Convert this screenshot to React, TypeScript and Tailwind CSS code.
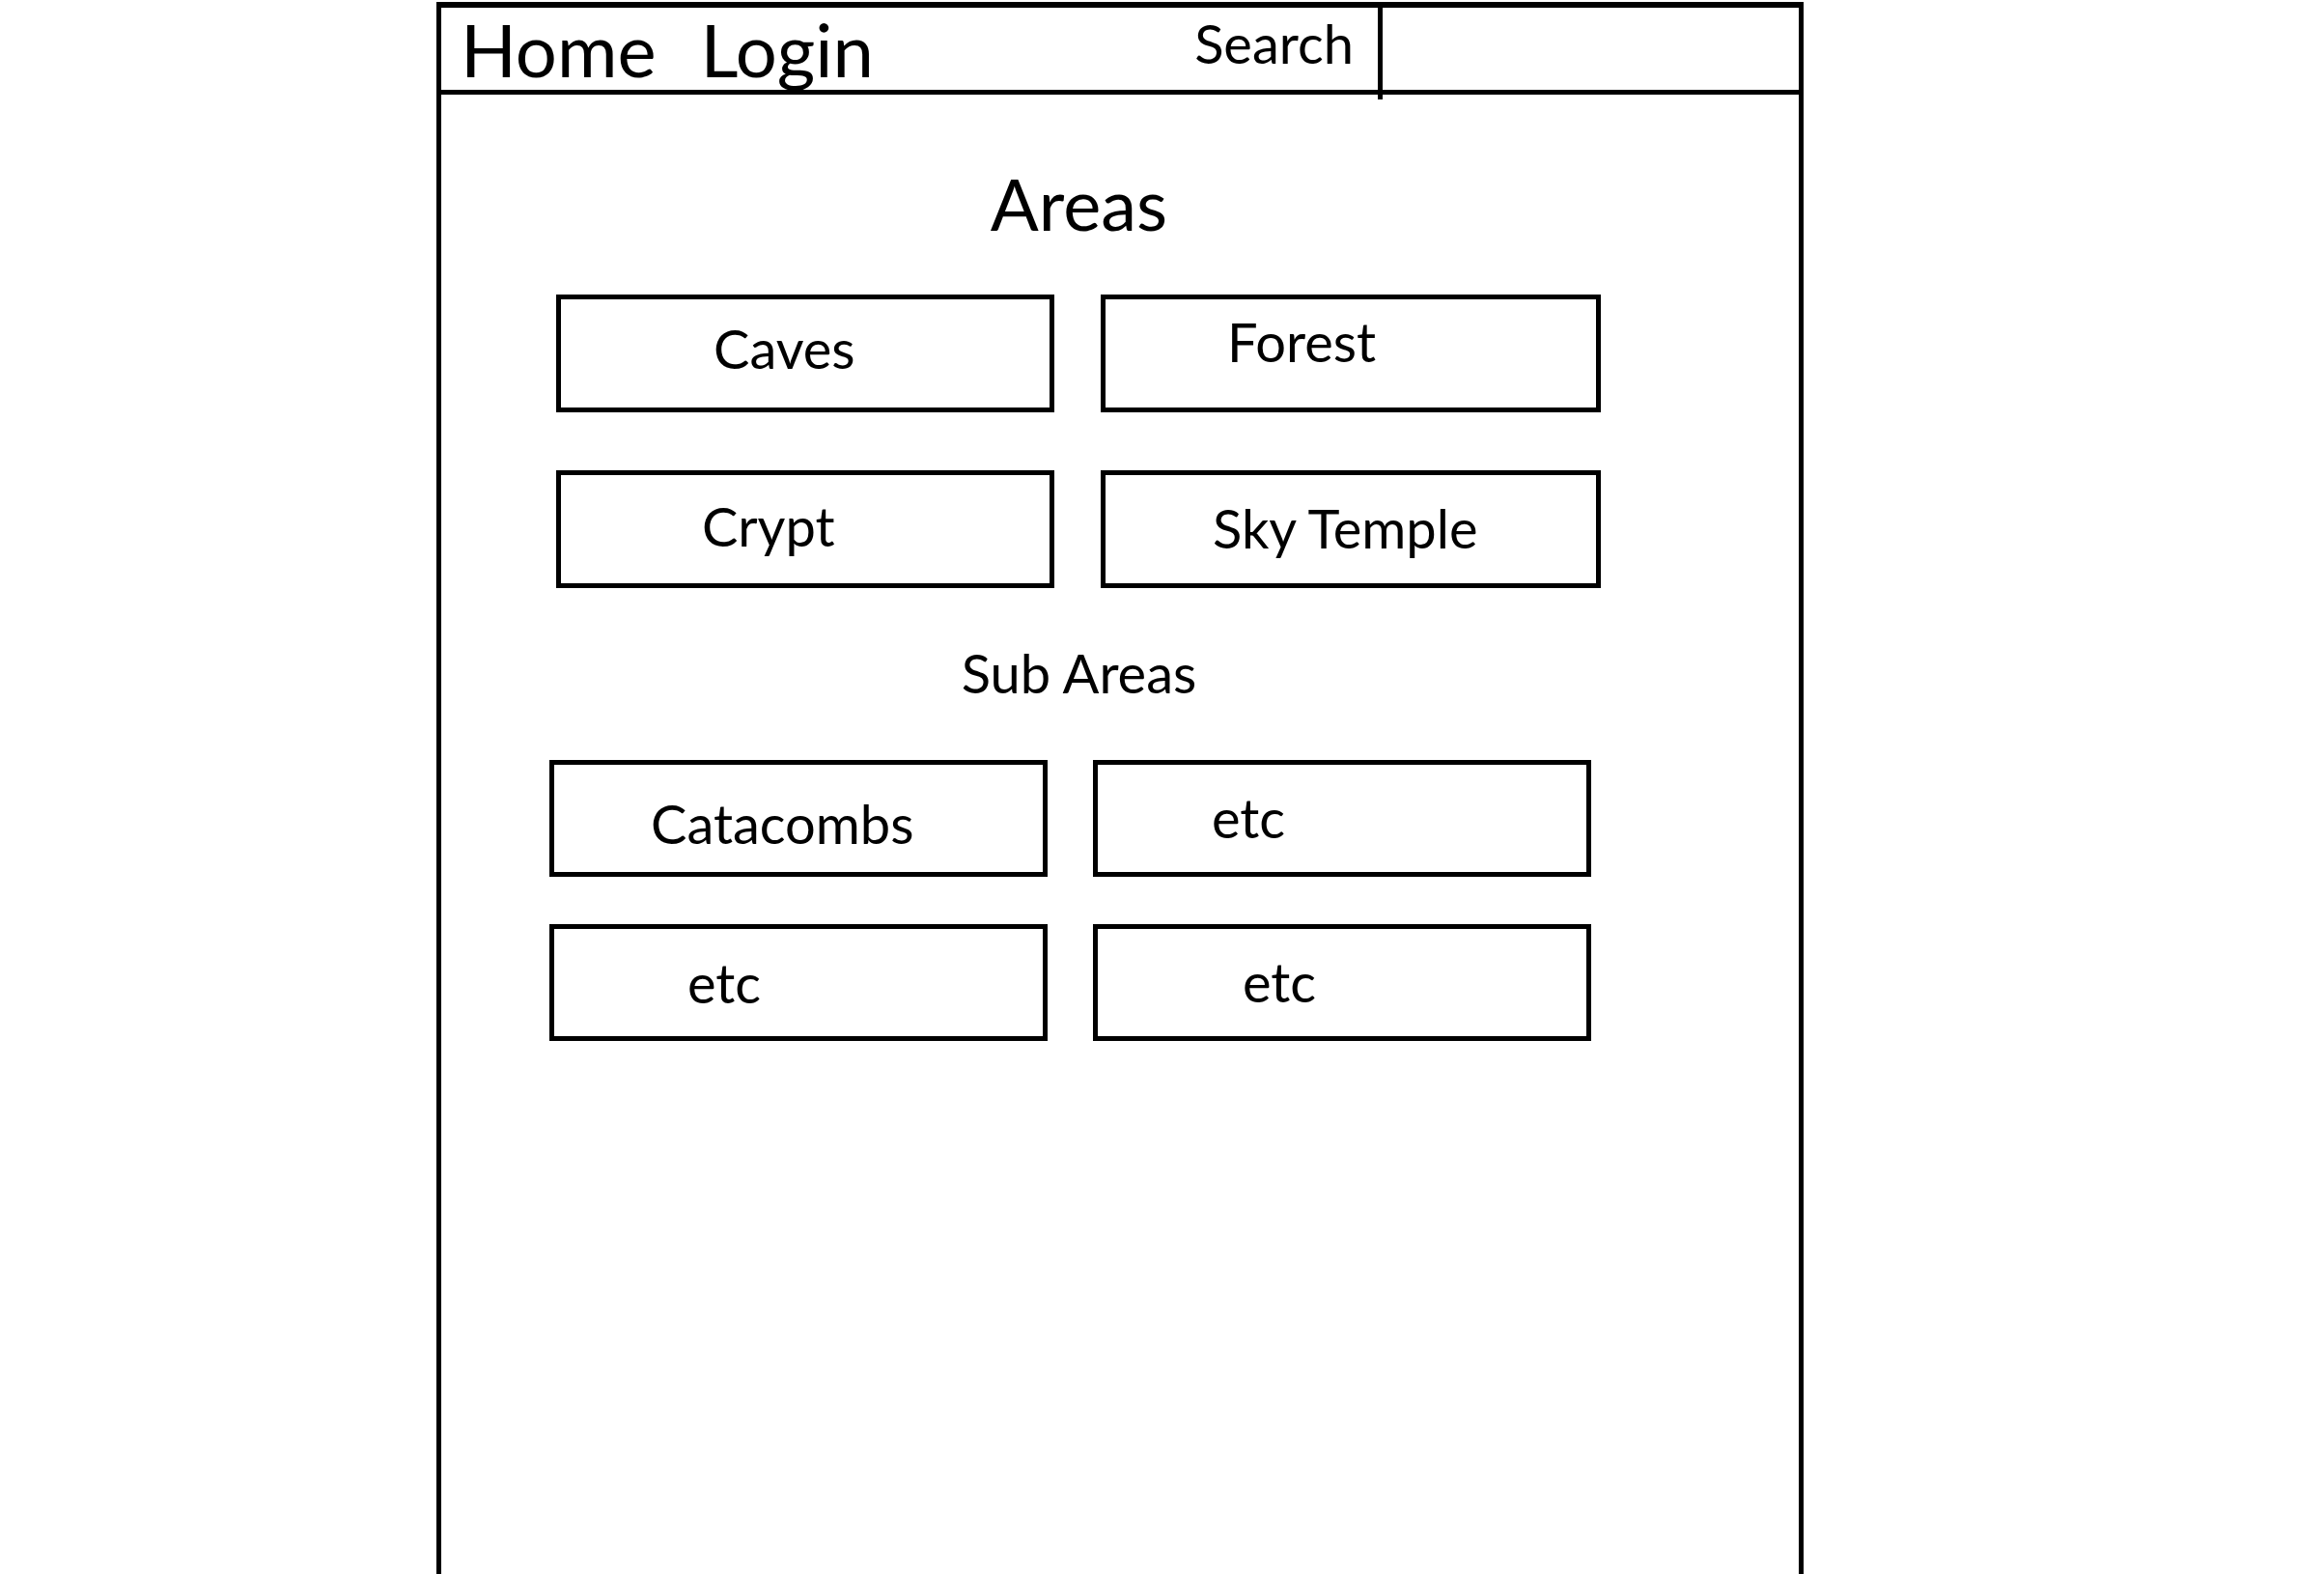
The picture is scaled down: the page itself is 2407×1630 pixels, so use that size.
import React from 'react';

interface Tile {
  label: string;
  pad: string;
}

const areas: Tile[] = [
  { label: 'Caves', pad: 'pl-[158px] pt-[23px]' },
  { label: 'Forest', pad: 'pl-[126px] pt-[16px]' },
  { label: 'Crypt', pad: 'pl-[146px] pt-[25px]' },
  { label: 'Sky Temple', pad: 'pl-[111px] pt-[27px]' },
];

const subAreas: Tile[] = [
  { label: 'Catacombs', pad: 'pl-[100px] pt-[33px]' },
  { label: 'etc', pad: 'pl-[118px] pt-[27px]' },
  { label: 'etc', pad: 'pl-[138px] pt-[28px]' },
  { label: 'etc', pad: 'pl-[150px] pt-[27px]' },
];

const TileBox: React.FC<{ tile: Tile; height: string }> = ({ tile, height }) => (
  <div className={`border-[5px] border-black ${height} ${tile.pad}`}>
    <span className="block text-[56px] leading-none whitespace-nowrap">{tile.label}</span>
  </div>
);

export default function App() {
  return (
    <div className="min-h-screen bg-white text-black font-['Lato',sans-serif]">
      <div className="ml-[452px] mt-[2px] w-[1416px] min-h-[1628px] border-x-[5px] border-t-[6px] border-black">
        {/* Header */}
        <header className="flex h-[90px] border-b-[5px] border-black">
          <div className="flex flex-1 justify-between">
            <nav className="flex gap-[46px] pl-[20px] pt-[5px]">
              <span className="text-[76px] leading-none">Home</span>
              <span className="text-[76px] leading-none">Login</span>
            </nav>
            <span className="pr-[25px] pt-[9px] text-[56px] leading-none">Search</span>
          </div>
          <div className="w-[5px] h-[95px] bg-black" />
          <div className="w-[431px]" />
        </header>

        {/* Areas */}
        <main className="pt-[76px]">
          <h1 className="ml-[119px] w-[1083px] text-center text-[74px] leading-none font-normal">Areas</h1>
          <div className="ml-[119px] mt-[57px] grid grid-cols-[516px_518px] gap-x-[48px] gap-y-[60px]">
            {areas.map((a) => (
              <TileBox key={a.label} tile={a} height="h-[122px]" />
            ))}
          </div>

          <h2 className="ml-[119px] mt-[60px] w-[1083px] text-center text-[56px] leading-none font-normal">Sub Areas</h2>
          <div className="ml-[112px] mt-[62px] grid grid-cols-[516px_516px] gap-x-[47px] gap-y-[49px]">
            {subAreas.map((a, i) => (
              <TileBox key={i} tile={a} height="h-[121px]" />
            ))}
          </div>
        </main>
      </div>
    </div>
  );
}
